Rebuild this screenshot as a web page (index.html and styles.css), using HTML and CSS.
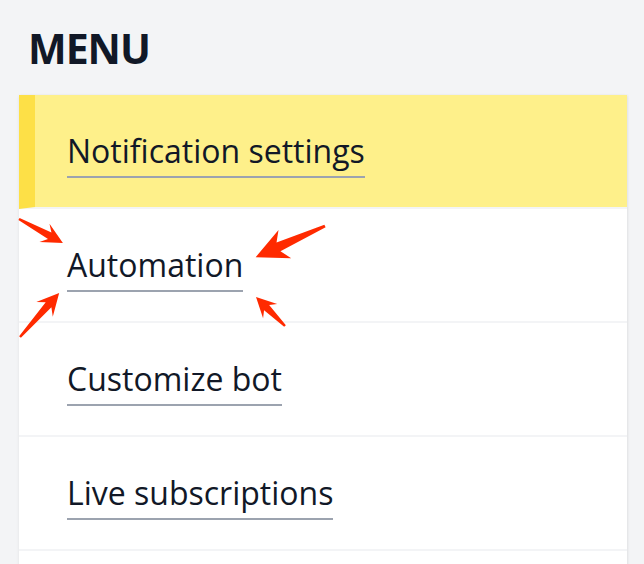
FILE: index.html
```html
<!DOCTYPE html>
<html lang="en">
<head>
<meta charset="utf-8">
<title>Menu</title>
<link rel="stylesheet" href="styles.css">
</head>
<body>
<div class="page">
  <h1 class="title">MENU</h1>
  <nav class="card">
    <div class="row row-active"><a class="link" href="#">Notification settings</a></div>
    <div class="row"><a class="link" href="#">Automation</a></div>
    <div class="row"><a class="link" href="#">Customize bot</a></div>
    <div class="row"><a class="link" href="#">Live subscriptions</a></div>
    <div class="row row-empty"></div>
  </nav>
</div>
<svg class="annotations" width="644" height="564" viewBox="0 0 644 564" aria-hidden="true">
  <g fill="#ff2a00">
    <g transform="translate(19,219) rotate(28.6)">
      <polygon points="0,-1.2 35,-3.6 29,-10.5 50,0 29,10.5 35,3.6 0,1.2"/>
    </g>
    <g transform="translate(20,337) rotate(-48.4)">
      <polygon points="0,-1.2 43,-3.8 37,-11 59,0 37,11 43,3.8 0,1.2"/>
    </g>
    <g transform="translate(325,226) rotate(155.8)">
      <polygon points="0,-1.5 51,-4.8 44,-15.5 76,0 44,15.5 51,4.8 0,1.5"/>
    </g>
    <g transform="translate(285,326) rotate(-135)">
      <polygon points="0,-1.2 26,-3.6 21,-10 41,0 21,10 26,3.6 0,1.2"/>
    </g>
  </g>
</svg>
</body>
</html>
```

FILE: styles.css
```css
html, body {
  margin: 0;
  padding: 0;
}

body {
  background: #f3f4f6;
  font-family: "Open Sans", "Noto Sans", sans-serif;
  color: #111827;
  overflow: hidden;
  position: relative;
  width: 644px;
  height: 564px;
}

.page {
  padding: 27px 17px 0 19px;
}

.title {
  margin: 0 0 26px 0;
  padding-left: 9px;
  font-size: 41px;
  line-height: 42px;
  font-weight: 700;
  letter-spacing: -1px;
  color: #111827;
}

.card {
  background: #ffffff;
  box-shadow: 0 1px 3px rgba(0, 0, 0, 0.08), 1px 0 2px rgba(0, 0, 0, 0.04);
  display: flex;
  flex-direction: column;
}

.row {
  display: flex;
  padding: 37px 0 29px 48px;
  border-bottom: 2px solid #f3f4f6;
}

.row-active {
  background: #fef08a;
  border-left: 16px solid #fde047;
  padding-left: 32px;
}

.row-empty {
  height: 46px;
}

.link {
  display: inline-block;
  font-size: 32px;
  line-height: 38px;
  padding-bottom: 6px;
  border-bottom: 2px solid #9ca3af;
  color: #111827;
  text-decoration: none;
}

.annotations {
  position: absolute;
  left: 0;
  top: 0;
  pointer-events: none;
}
```
